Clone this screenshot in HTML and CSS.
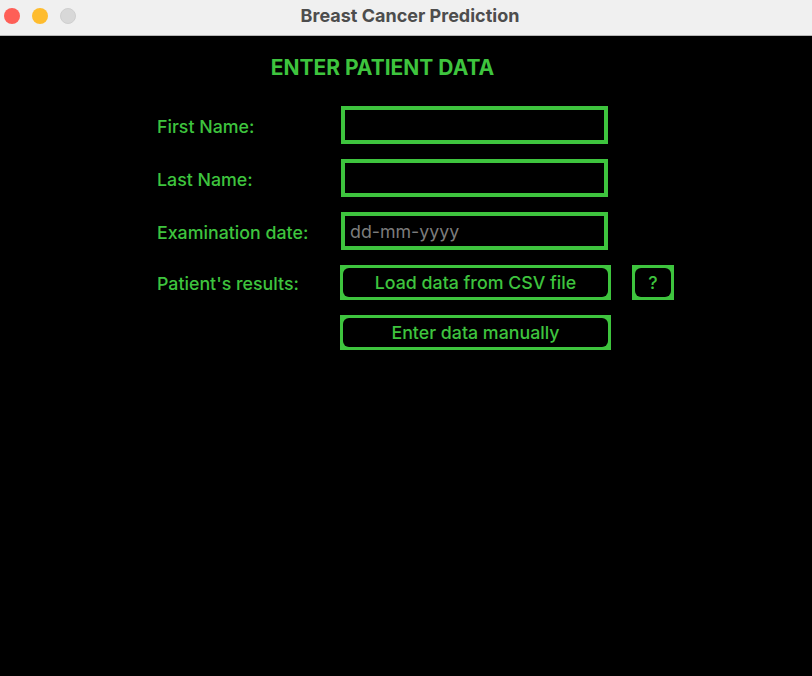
FILE: index.html
```html
<!DOCTYPE html>
<html lang="en">
<head>
<meta charset="utf-8">
<title>Breast Cancer Prediction</title>
<link rel="stylesheet" href="styles.css">
</head>
<body>
<div class="titlebar">
  <div class="lights">
    <span class="light red"></span>
    <span class="light yellow"></span>
    <span class="light grey"></span>
  </div>
  <div class="title">Breast Cancer Prediction</div>
</div>
<main class="window">
  <div class="grid">
    <h1 class="heading">ENTER PATIENT DATA</h1>
    <span></span>

    <label class="label" for="fn">First Name:</label>
    <input class="entry" id="fn" type="text">
    <span></span>

    <label class="label" for="ln">Last Name:</label>
    <input class="entry" id="ln" type="text">
    <span></span>

    <label class="label" for="dt">Examination date:</label>
    <input class="entry" id="dt" type="text" placeholder="dd-mm-yyyy">
    <span></span>

    <span class="label">Patient's results:</span>
    <button class="btn wide"><span class="btn-in">Load data from CSV file</span></button>
    <button class="btn help"><span class="btn-in">?</span></button>

    <span></span>
    <button class="btn wide"><span class="btn-in">Enter data manually</span></button>
    <span></span>
  </div>
</main>
</body>
</html>
```
FILE: styles.css
```css
* { box-sizing: border-box; }
html, body {
  margin: 0;
  padding: 0;
  height: 100%;
  background: #000;
  font-family: Inter, "Liberation Sans", sans-serif;
}
.titlebar {
  height: 36px;
  background: #f0f0f0;
  border-bottom: 1px solid #b8b8b8;
  display: flex;
  align-items: center;
  justify-content: center;
  position: relative;
}
.lights {
  position: absolute;
  left: 4px;
  top: 8px;
  display: flex;
  gap: 12px;
}
.light {
  width: 16px;
  height: 16px;
  border-radius: 50%;
  display: block;
}
.red { background: #fe5f57; }
.yellow { background: #febc2e; }
.grey { background: #d8d8d8; border: 1px solid #cfcfcf; }
.title {
  font-weight: 700;
  font-size: 18px;
  color: #4d4d4d;
  margin-left: 8px;
  margin-top: -4px;
}
.window {
  background: #000;
  height: calc(100% - 36px);
  padding-top: 20px;
}
.grid {
  margin-left: 157px;
  display: grid;
  grid-template-columns: 184px 267px auto;
  row-gap: 15px;
  align-items: center;
  justify-items: start;
}
.heading {
  grid-column: 1 / 3;
  justify-self: center;
  margin: 0 0 11px 0;
  font-size: 21px;
  line-height: 24px;
  font-weight: 700;
  color: #3ec43e;
}
.label {
  color: #3ec43e;
  font-size: 17.8px;
  font-weight: 500;
  padding-top: 2px;
}
.entry {
  width: 267px;
  height: 38px;
  border: 4px solid #3ec43e;
  background: #000;
  color: #3ec43e;
  padding: 0 5px;
  font-family: inherit;
  font-size: 17.8px;
  outline: none;
}
.entry::placeholder { color: #7c7c7c; }
.btn {
  height: 35px;
  background: #3ec43e;
  border: none;
  padding: 3px;
  margin: 0;
  display: flex;
  font-family: inherit;
}
.btn.wide { width: 271px; margin-left: -1px; }
.btn.help { width: 42px; margin-left: 24px; }
.btn-in {
  flex: 1;
  background: #000;
  border-radius: 6px;
  color: #3ec43e;
  font-size: 17.8px;
  font-weight: 500;
  white-space: nowrap;
  display: flex;
  align-items: center;
  justify-content: center;
}
```
